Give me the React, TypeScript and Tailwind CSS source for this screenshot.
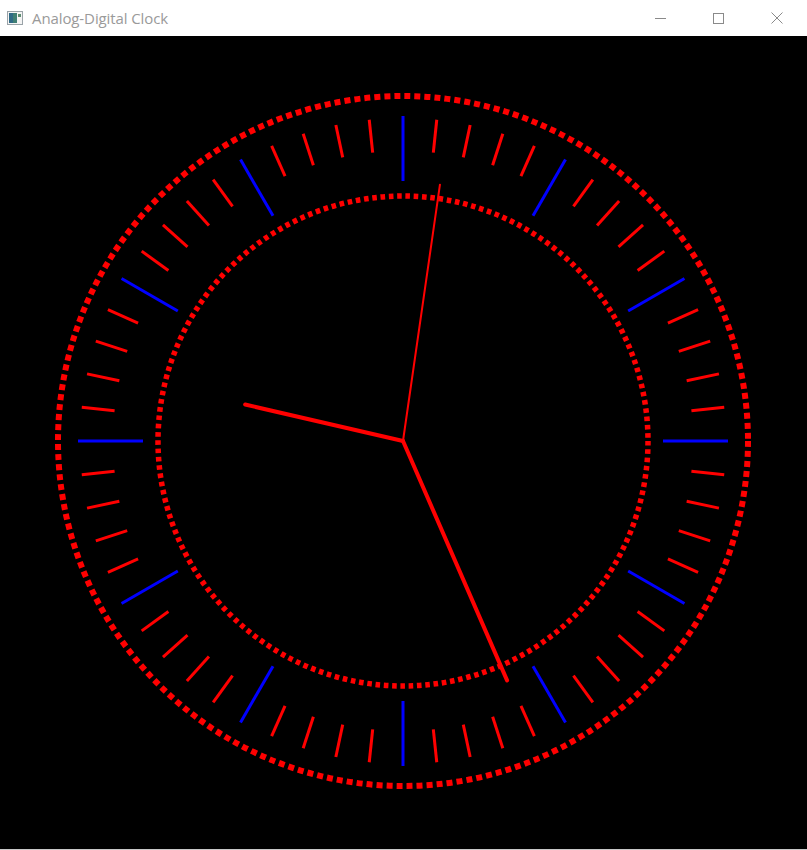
import React from 'react'

const CX = 403
const CY = 405

function polar(r: number, deg: number) {
  const a = (deg * Math.PI) / 180
  return { x: CX + r * Math.sin(a), y: CY - r * Math.cos(a) }
}

function Ticks() {
  const items = []
  for (let i = 0; i < 60; i++) {
    const hour = i % 5 === 0
    const a = polar(hour ? 260 : 290, i * 6)
    const b = polar(hour ? 325 : 323, i * 6)
    items.push(
      <line
        key={i}
        x1={a.x}
        y1={a.y}
        x2={b.x}
        y2={b.y}
        stroke={hour ? '#0000ff' : '#ff0000'}
        strokeWidth={3}
      />
    )
  }
  return <g>{items}</g>
}

function Hand({ deg, len, w }: { deg: number; len: number; w: number }) {
  const p = polar(len, deg)
  return <line x1={CX} y1={CY} x2={p.x} y2={p.y} stroke="#ff0000" strokeWidth={w} strokeLinecap="round" />
}

export default function App() {
  return (
    <div className="w-[807px] h-[850px] flex flex-col bg-white border-b border-[#c8c8c8]">
      {/* Title bar */}
      <div className="h-9 flex items-center shrink-0 bg-white">
        <div className="pl-[7px] pr-[9px] flex items-center">
          <svg width="16" height="14" viewBox="0 0 16 14">
            <rect x="0.5" y="0.5" width="15" height="13" fill="#f4f4f4" stroke="#9aa3a8" />
            <rect x="2" y="2" width="8" height="10" fill="#3f7f74" />
            <rect x="2" y="2" width="4" height="10" fill="#2f6a86" />
            <rect x="11" y="3" width="3" height="3" fill="#5c8c70" />
          </svg>
        </div>
        <span className="text-[15px] text-[#9a9a9a] font-['Open_Sans','Noto_Sans',sans-serif] tracking-[-0.1px]">
          Analog-Digital Clock
        </span>
        <div className="ml-auto flex h-full">
          <div className="w-[58px] h-full flex items-center justify-center">
            <div className="w-[11px] h-px bg-[#8a8a8a]" />
          </div>
          <div className="w-[58px] h-full flex items-center justify-center">
            <div className="w-[11px] h-[11px] border border-[#8a8a8a]" />
          </div>
          <div className="w-[60px] h-full flex items-center justify-center">
            <svg width="12" height="12" viewBox="0 0 12 12">
              <path d="M0.5 0.5 L11.5 11.5 M11.5 0.5 L0.5 11.5" stroke="#8a8a8a" strokeWidth="1" />
            </svg>
          </div>
        </div>
      </div>

      {/* Canvas */}
      <div className="flex-1 bg-black">
        <svg width="807" height="812" viewBox="0 0 807 812">
          <circle cx={CX} cy={CY} r={345} fill="none" stroke="#ff0000" strokeWidth={6} strokeDasharray="6 4.04" />
          <circle cx={CX} cy={CY} r={245} fill="none" stroke="#ff0000" strokeWidth={5.5} strokeDasharray="4.6 3.72" />
          <Ticks />
          <Hand deg={283} len={162} w={4} />
          <Hand deg={156.5} len={261} w={4} />
          <Hand deg={8.2} len={259} w={2} />
        </svg>
      </div>
    </div>
  )
}
